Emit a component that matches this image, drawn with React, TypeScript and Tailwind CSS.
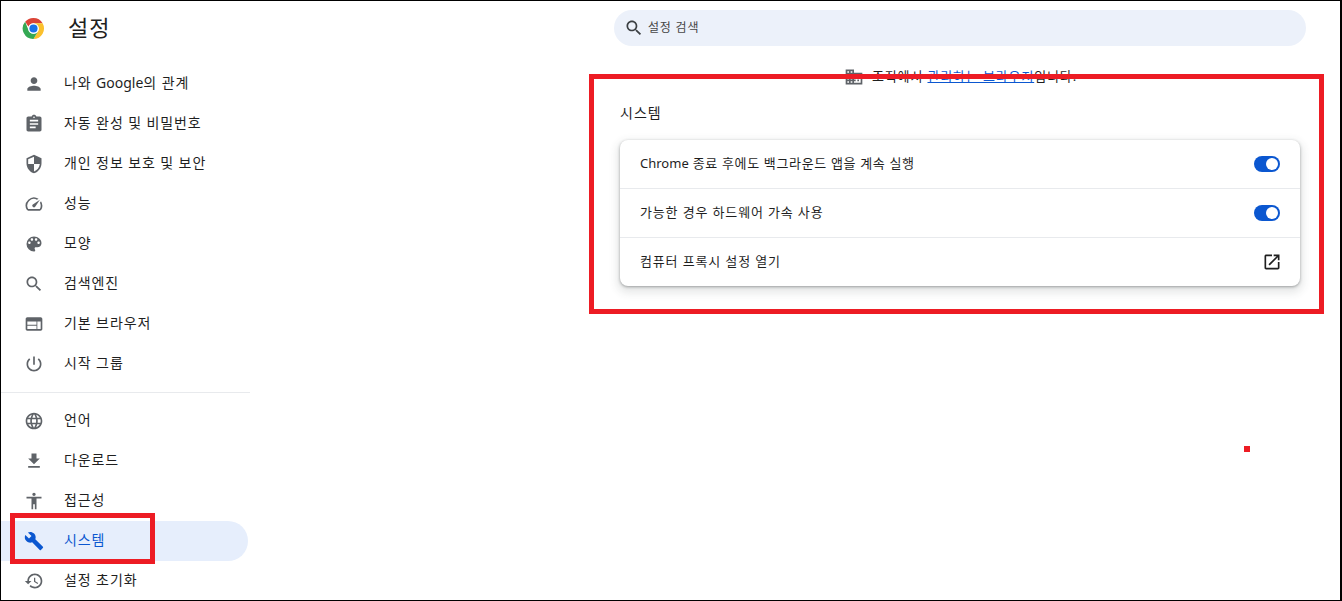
const P: Record<string, string> = {
  person: "M12 12c2.21 0 4-1.79 4-4s-1.79-4-4-4-4 1.79-4 4 1.79 4 4 4zm0 2c-2.67 0-8 1.34-8 4v2h16v-2c0-2.66-5.33-4-8-4z",
  assignment: "M19 3h-4.18C14.4 1.84 13.3 1 12 1c-1.3 0-2.4.84-2.82 2H5c-1.1 0-2 .9-2 2v14c0 1.1.9 2 2 2h14c1.1 0 2-.9 2-2V5c0-1.1-.9-2-2-2zm-7 0c.55 0 1 .45 1 1s-.45 1-1 1-1-.45-1-1 .45-1 1-1zm2 14H7v-2h7v2zm3-4H7v-2h10v2zm0-4H7V7h10v2z",
  shield: "M12 1L3 5v6c0 5.55 3.84 10.74 9 12 5.16-1.26 9-6.45 9-12V5l-9-4zm0 10.99h7c-.53 4.12-3.28 7.79-7 8.94V12H5V6.3l7-3.11v8.8z",
  speed: "M20.38 8.57l-1.23 1.85a8 8 0 0 1-.22 7.58H5.07A8 8 0 0 1 15.58 6.85l1.85-1.23A10 10 0 0 0 3.35 19a2 2 0 0 0 1.72 1h13.85a2 2 0 0 0 1.74-1 10 10 0 0 0-.27-10.44zm-9.79 6.84a2 2 0 0 0 2.83 0l5.66-8.49-8.49 5.66a2 2 0 0 0 0 2.83z",
  palette: "M12 3a9 9 0 0 0 0 18c.83 0 1.5-.67 1.5-1.5 0-.39-.15-.74-.39-1.01-.23-.26-.38-.61-.38-.99 0-.83.67-1.5 1.5-1.5H16c2.76 0 5-2.24 5-5 0-4.42-4.03-8-9-8zm-5.5 9c-.83 0-1.5-.67-1.5-1.5S5.67 9 6.5 9 8 9.67 8 10.5 7.33 12 6.5 12zm3-4C8.67 8 8 7.33 8 6.5S8.67 5 9.5 5s1.5.67 1.5 1.5S10.33 8 9.5 8zm5 0c-.83 0-1.5-.67-1.5-1.5S13.67 5 14.5 5s1.5.67 1.5 1.5S15.33 8 14.5 8zm3 4c-.83 0-1.5-.67-1.5-1.5S16.67 9 17.5 9s1.5.67 1.5 1.5-.67 1.5-1.5 1.5z",
  search: "M15.5 14h-.79l-.28-.27C15.41 12.59 16 11.11 16 9.5 16 5.91 13.09 3 9.5 3S3 5.91 3 9.5 5.91 16 9.5 16c1.61 0 3.09-.59 4.23-1.57l.27.28v.79l5 4.99L20.49 19l-4.99-5zm-6 0C7.01 14 5 11.99 5 9.5S7.01 5 9.5 5 14 7.01 14 9.5 11.99 14 9.5 14z",
  web: "M20 4H4c-1.1 0-1.99.9-1.99 2L2 18c0 1.1.9 2 2 2h16c1.1 0 2-.9 2-2V6c0-1.1-.9-2-2-2zm-5 14H4v-4h11v4zm0-5H4V9h11v4zm5 5h-4V9h4v9z",
  power: "M13 3h-2v10h2V3zm4.83 2.17l-1.42 1.42C17.99 7.86 19 9.81 19 12c0 3.87-3.13 7-7 7s-7-3.13-7-7c0-2.19 1.01-4.14 2.58-5.42L6.17 5.17C4.23 6.82 3 9.26 3 12c0 4.97 4.03 9 9 9s9-4.03 9-9c0-2.74-1.23-5.18-3.17-6.83z",
  language: "M11.99 2C6.47 2 2 6.48 2 12s4.47 10 9.99 10C17.52 22 22 17.52 22 12S17.52 2 11.99 2zm6.93 6h-2.95c-.32-1.25-.78-2.45-1.38-3.56 1.84.63 3.37 1.91 4.33 3.56zM12 4.04c.83 1.2 1.48 2.53 1.91 3.96h-3.82c.43-1.43 1.08-2.76 1.91-3.96zM4.26 14C4.1 13.36 4 12.69 4 12s.1-1.36.26-2h3.38c-.08.66-.14 1.32-.14 2 0 .68.06 1.34.14 2H4.26zm.82 2h2.95c.32 1.25.78 2.45 1.38 3.56-1.84-.63-3.37-1.9-4.33-3.56zm2.95-8H5.08c.96-1.66 2.49-2.93 4.33-3.56C8.81 5.55 8.35 6.75 8.03 8zM12 19.96c-.83-1.2-1.48-2.53-1.91-3.96h3.82c-.43 1.43-1.08 2.76-1.91 3.96zM14.34 14H9.66c-.09-.66-.16-1.32-.16-2 0-.68.07-1.35.16-2h4.68c.09.65.16 1.32.16 2 0 .68-.07 1.34-.16 2zm.25 5.56c.6-1.11 1.06-2.31 1.38-3.56h2.95c-.96 1.65-2.49 2.93-4.33 3.56zM16.36 14c.08-.66.14-1.32.14-2 0-.68-.06-1.34-.14-2h3.38c.16.64.26 1.31.26 2s-.1 1.36-.26 2h-3.38z",
  download: "M19 9h-4V3H9v6H5l7 7 7-7zM5 18v2h14v-2H5z",
  accessibility: "M12 2c1.1 0 2 .9 2 2s-.9 2-2 2-2-.9-2-2 .9-2 2-2zm9 7h-6v13h-2v-6h-2v6H9V9H3V7h18v2z",
  build: "M22.7 19l-9.1-9.1c.9-2.3.4-5-1.5-6.9-2-2-5-2.4-7.4-1.3L9 6 6 9 1.6 4.7C.4 7.1.9 10.1 2.9 12.1c1.9 1.9 4.6 2.4 6.9 1.5l9.1 9.1c.4.4 1 .4 1.4 0l2.3-2.3c.5-.4.5-1.1.1-1.4z",
  restore: "M13 3c-4.97 0-9 4.03-9 9H1l3.89 3.89.07.14L9 12H6c0-3.87 3.13-7 7-7s7 3.13 7 7-3.13 7-7 7c-1.93 0-3.68-.79-4.94-2.06l-1.42 1.42C8.27 19.99 10.51 21 13 21c4.97 0 9-4.03 9-9s-4.03-9-9-9zm-1 5v5l4.28 2.54.72-1.21-3.5-2.08V8H12z",
  open: "M19 19H5V5h7V3H5c-1.11 0-2 .9-2 2v14c0 1.1.89 2 2 2h14c1.1 0 2-.9 2-2v-7h-2v7zM14 3v2h3.59l-9.83 9.83 1.41 1.41L19 6.41V10h2V3h-7z",
  domain: "M12 7V3H2v18h20V7H12zM6 19H4v-2h2v2zm0-4H4v-2h2v2zm0-4H4V9h2v2zm0-4H4V5h2v2zm4 12H8v-2h2v2zm0-4H8v-2h2v2zm0-4H8V9h2v2zm0-4H8V5h2v2zm10 12h-8v-2h2v-2h-2v-2h2v-2h-2V9h8v10zm-2-8h-2v2h2v-2zm0 4h-2v2h2v-2z",
};

function Icon({ name, className }: { name: string; className: string }) {
  return (
    <svg viewBox="0 0 24 24" fill="currentColor" className={className}>
      <path d={P[name]} />
    </svg>
  );
}

function ChromeLogo() {
  return (
    <svg viewBox="0 0 48 48" className="w-[23px] h-[23px]">
      <path fill="#db4437" d="M24 2a22 22 0 0 1 19.05 11H24a11 11 0 0 0-10.4 7.4L6.6 9.9A22 22 0 0 1 24 2z" />
      <path fill="#fbc02d" d="M43.05 13A22 22 0 0 1 24 46l9.5-16.5A11 11 0 0 0 32 17l-8-4z" />
      <path fill="#34a853" d="M6.6 9.9 14.5 29.5A11 11 0 0 0 33.5 29.5L24 46A22 22 0 0 1 6.6 9.9z" />
      <circle cx="24" cy="24" r="11" fill="#fff" />
      <circle cx="24" cy="24" r="8.5" fill="#1a73e8" />
    </svg>
  );
}

function NavItem({ icon, label, active }: { icon: string; label: any; active?: boolean }) {
  return (
    <div
      className={
        "h-10 flex items-center rounded-r-[20px] text-[14px] tracking-[0.9px] w-[247px] " +
        (active ? "bg-[#e6eefc] text-[#0b57d0]" : "text-[#1f1f1f]")
      }
    >
      <div className="w-[63px] flex justify-center pl-[3px]">
        <Icon name={icon} className={"w-5 h-5 " + (active ? "text-[#0b57d0]" : "text-[#5f6368]")} />
      </div>
      <span className="leading-none -translate-y-[1px]">{label}</span>
    </div>
  );
}

function Toggle() {
  return (
    <div className="w-[26px] h-4 rounded-full bg-[#0b57d0] flex items-center justify-end pr-[2px]">
      <div className="w-3 h-3 rounded-full bg-white" />
    </div>
  );
}

function Row({ label, last, children }: { label: any; last?: boolean; children: any }) {
  return (
    <div
      className={
        "flex items-center justify-between pl-5 pr-5 text-[13px] tracking-[0.85px] text-[#1f1f1f] " +
        (last ? "h-[48px]" : "h-[49px] border-b border-[#e8eaed]")
      }
    >
      <span>{label}</span>
      {children}
    </div>
  );
}

export default function App() {
  return (
    <div
      className="relative w-[1342px] h-[601px] border border-r-2 border-black bg-white flex overflow-hidden"
      style={{ fontFamily: '"Noto Sans", "Noto Sans CJK KR", sans-serif' }}
    >
      <aside className="w-[249px] shrink-0">
        <div className="h-[63px] flex items-center pl-[21px] pb-[9px]">
          <ChromeLogo />
          <span className="ml-[23px] text-[22px] tracking-[1px] leading-none -translate-y-[1px] text-[#1f1f1f]">설정</span>
        </div>
        <nav>
          <NavItem
            icon="person"
            label={
              <>
                나와 <span className="tracking-normal">Google</span>의 관계
              </>
            }
          />
          <NavItem icon="assignment" label="자동 완성 및 비밀번호" />
          <NavItem icon="shield" label="개인 정보 보호 및 보안" />
          <NavItem icon="speed" label="성능" />
          <NavItem icon="palette" label="모양" />
          <NavItem icon="search" label="검색엔진" />
          <NavItem icon="web" label="기본 브라우저" />
          <NavItem icon="power" label="시작 그룹" />
          <div className="mt-[8px] mb-[8px] h-px bg-[#e8eaed]" />
          <NavItem icon="language" label="언어" />
          <NavItem icon="download" label="다운로드" />
          <NavItem icon="accessibility" label="접근성" />
          <NavItem icon="build" label="시스템" active />
          <NavItem icon="restore" label="설정 초기화" />
        </nav>
      </aside>
      <main className="flex-1 min-w-0">
        <div className="ml-[364px] mt-[9px] w-[692px] h-9 rounded-full bg-[#ecf1fa] flex items-center pl-[10px] text-[12px] tracking-[0.8px] text-[#474747]">
          <Icon name="search" className="w-5 h-5 text-[#3c4043]" />
          <span className="ml-[4px]">설정 검색</span>
        </div>
        <div className="mt-[21px] ml-[594px] h-5 flex items-center text-[13px] tracking-[0.85px] text-[#1f1f1f]">
          <Icon name="domain" className="w-[20px] h-[20px] text-[#5f6368]" />
          <span className="ml-[8px]">
            조직에서 <span className="text-[#0b57d0] underline">관리하는 브라우저</span>입니다.
          </span>
        </div>
        <h2 className="ml-[370px] mt-[15px] h-5 flex items-center text-[14px] tracking-[1px] font-normal text-[#1f1f1f]">시스템</h2>
        <section className="ml-[370px] mt-[18px] w-[680px] h-[146px] bg-white rounded-lg shadow-[0_1px_3px_rgba(60,64,67,0.45),0_4px_8px_3px_rgba(60,64,67,0.12)]">
          <Row
            label={
              <span className="tracking-[0.65px]">
                <span className="tracking-normal">Chrome</span> 종료 후에도 백그라운드 앱을 계속 실행
              </span>
            }
          >
            <Toggle />
          </Row>
          <Row label="가능한 경우 하드웨어 가속 사용">
            <Toggle />
          </Row>
          <Row label="컴퓨터 프록시 설정 열기" last>
            <Icon name="open" className="w-5 h-5 -mr-[2px] text-[#1f1f1f]" />
          </Row>
        </section>
      </main>
      <div className="absolute left-[588px] top-[73px] w-[735px] h-[240px] border-[5px] border-[#ed1c24]" />
      <div className="absolute left-[9px] top-[512px] w-[145px] h-[51px] border-[5px] border-[#ed1c24]" />
      <div className="absolute left-[1243px] top-[445px] w-[6px] h-[6px] bg-[#ed1c24]" />
    </div>
  );
}
